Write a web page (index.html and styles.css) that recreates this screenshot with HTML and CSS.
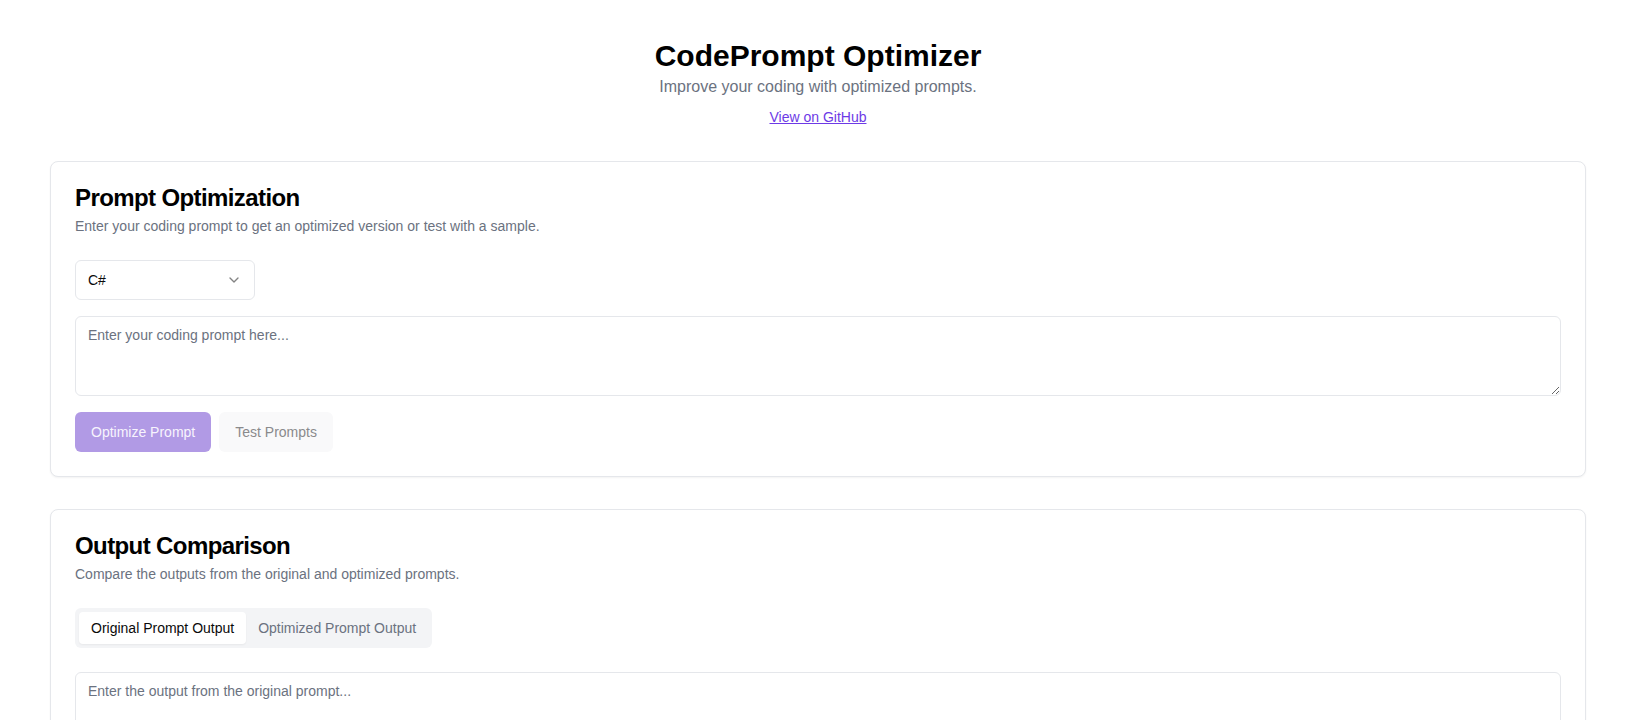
FILE: index.html
```html
<!DOCTYPE html>
<html lang="en">
<head>
<meta charset="utf-8">
<title>CodePrompt Optimizer</title>
<link rel="stylesheet" href="styles.css">
</head>
<body>
<div class="page">
  <header class="hero">
    <h1 class="hero-title">CodePrompt Optimizer</h1>
    <p class="hero-sub">Improve your coding with optimized prompts.</p>
    <p class="hero-link-row"><a class="hero-link" href="#">View on GitHub</a></p>
  </header>

  <section class="card">
    <div class="card-header">
      <h2 class="card-title">Prompt Optimization</h2>
      <p class="card-desc">Enter your coding prompt to get an optimized version or test with a sample.</p>
    </div>
    <div class="card-content">
      <button class="select" type="button">
        <span>C#</span>
        <svg class="chev" width="16" height="16" viewBox="0 0 24 24" fill="none" stroke="currentColor" stroke-width="2" stroke-linecap="round" stroke-linejoin="round"><path d="m6 9 6 6 6-6"/></svg>
      </button>
      <textarea class="textarea" placeholder="Enter your coding prompt here..."></textarea>
      <div class="btn-row">
        <button class="btn btn-primary" type="button">Optimize Prompt</button>
        <button class="btn btn-secondary" type="button">Test Prompts</button>
      </div>
    </div>
  </section>

  <section class="card">
    <div class="card-header">
      <h2 class="card-title">Output Comparison</h2>
      <p class="card-desc">Compare the outputs from the original and optimized prompts.</p>
    </div>
    <div class="card-content">
      <div class="tabs">
        <button class="tab tab-active" type="button">Original Prompt Output</button>
        <button class="tab" type="button">Optimized Prompt Output</button>
      </div>
      <textarea class="textarea textarea-tall tab-panel" placeholder="Enter the output from the original prompt..."></textarea>
    </div>
  </section>
</div>
</body>
</html>
```

FILE: styles.css
```css
* { box-sizing: border-box; }

body {
  margin: 0;
  background: #ffffff;
  color: #0a0a0a;
  font-family: "Liberation Sans", Arial, sans-serif;
}

.page {
  max-width: 1536px;
  margin: 0 auto;
  padding: 38px 0 40px;
}

.hero {
  text-align: center;
  margin-bottom: 34px;
}

.hero-title {
  margin: 0;
  font-size: 30px;
  line-height: 36px;
  font-weight: 700;
  color: #000;
}

.hero-sub {
  margin: 1px 0 0;
  font-size: 16px;
  line-height: 24px;
  color: #6b7280;
}

.hero-link-row {
  margin: 8px 0 0;
  font-size: 14px;
  line-height: 20px;
}

.hero-link {
  color: #6d3ae6;
  text-decoration: underline;
}

.card {
  border: 1px solid #e5e7eb;
  border-radius: 8px;
  background: #fff;
  box-shadow: 0 1px 2px rgba(0, 0, 0, 0.05);
  margin-bottom: 32px;
}

.card-header {
  display: flex;
  flex-direction: column;
  gap: 6px;
  padding: 24px;
}

.card-title {
  margin: 0;
  font-size: 24px;
  line-height: 24px;
  font-weight: 700;
  letter-spacing: -0.025em;
  color: #000;
}

.card-desc {
  margin: 0;
  font-size: 14px;
  line-height: 20px;
  color: #6b7280;
}

.card-content {
  padding: 0 24px 24px;
  display: flex;
  flex-direction: column;
  gap: 16px;
}

.select {
  display: flex;
  align-items: center;
  justify-content: space-between;
  width: 180px;
  height: 40px;
  padding: 8px 12px;
  border: 1px solid #e5e7eb;
  border-radius: 6px;
  background: #fff;
  font-family: inherit;
  font-size: 14px;
  color: #0a0a0a;
  text-align: left;
}

.chev {
  opacity: 0.5;
  color: #0a0a0a;
}

.textarea {
  display: block;
  width: 100%;
  min-height: 80px;
  height: 80px;
  padding: 8px 12px;
  border: 1px solid #e5e7eb;
  border-radius: 6px;
  background: #fff;
  font-family: inherit;
  font-size: 14px;
  line-height: 20px;
  color: #0a0a0a;
}

.textarea::placeholder {
  color: #6b7280;
}

.textarea-tall {
  height: 200px;
}

.tab-panel {
  margin-top: 8px;
}

.btn-row {
  display: flex;
  gap: 8px;
}

.btn {
  height: 40px;
  padding: 0 16px;
  border: none;
  border-radius: 6px;
  font-family: inherit;
  font-size: 14px;
  font-weight: 500;
}

.btn-primary {
  background: #b19ae5;
  color: #f7f4fd;
}

.btn-secondary {
  background: #f9f9fa;
  color: #8a8a8c;
}

.tabs {
  display: inline-flex;
  align-self: flex-start;
  align-items: center;
  height: 40px;
  padding: 4px;
  border-radius: 6px;
  background: #f3f4f6;
}

.tab {
  height: 32px;
  padding: 6px 12px;
  border: none;
  border-radius: 4px;
  background: transparent;
  font-family: inherit;
  font-size: 14px;
  font-weight: 500;
  line-height: 20px;
  color: #6b7280;
}

.tab-active {
  background: #fff;
  color: #0a0a0a;
  box-shadow: 0 1px 2px rgba(0, 0, 0, 0.05);
}
```
